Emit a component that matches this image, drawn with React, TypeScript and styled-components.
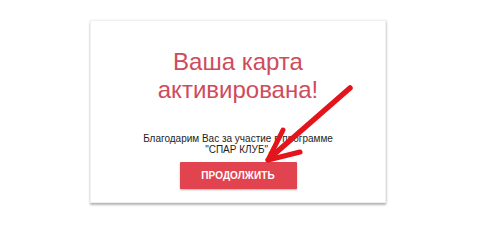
import React from 'react';
import styled, { createGlobalStyle } from 'styled-components';

const GlobalStyle = createGlobalStyle`
  html, body {
    margin: 0;
    padding: 0;
    background: #ffffff;
  }
  body {
    width: 480px;
    height: 240px;
    overflow: hidden;
  }
`;

const Page = styled.div`
  position: relative;
  width: 480px;
  height: 240px;
  padding: 20px 0 0 90px;
  box-sizing: border-box;
`;

const Card = styled.div`
  width: 296px;
  height: 183px;
  box-sizing: border-box;
  background: #ffffff;
  border: 1px solid #f0f0f0;
  box-shadow: 0 2px 2px rgba(0, 0, 0, 0.28), 1px 0 2px rgba(0, 0, 0, 0.08);
  display: flex;
  flex-direction: column;
  align-items: center;
  padding-top: 27px;
`;

const Title = styled.h1`
  margin: 0;
  font-family: 'Liberation Sans', Arial, sans-serif;
  font-weight: normal;
  font-size: 24px;
  line-height: 28px;
  color: #cf4b5c;
  text-align: center;
`;

const Message = styled.p`
  margin: 29px 0 0;
  font-family: 'Liberation Sans', Arial, sans-serif;
  font-size: 10px;
  line-height: 11px;
  color: #1e1e1e;
  text-align: center;
`;

const ContinueButton = styled.button`
  margin-top: 7px;
  width: 117px;
  height: 27px;
  border: none;
  border-radius: 1px;
  background: #e1434f;
  box-shadow: 0 1px 2px rgba(0, 0, 0, 0.3);
  color: #ffffff;
  font-family: 'Liberation Sans', Arial, sans-serif;
  font-weight: bold;
  font-size: 10px;
  letter-spacing: 0.1px;
  cursor: pointer;
`;

const Arrow = styled.svg`
  position: absolute;
  left: 0;
  top: 0;
  pointer-events: none;
`;

export default function App() {
  return (
    <>
      <GlobalStyle />
      <Page>
        <Card>
          <Title>
            Ваша карта
            <br />
            активирована!
          </Title>
          <Message>
            Благодарим Вас за участие в программе
            <br />
            "СПАР КЛУБ".
          </Message>
          <ContinueButton>ПРОДОЛЖИТЬ</ContinueButton>
        </Card>
        <Arrow width="480" height="240" viewBox="0 0 480 240">
          <g stroke="#e4141c" strokeLinecap="round" strokeLinejoin="round" fill="none">
            <path d="M350 88 L271 157" strokeWidth="5.5" />
            <path d="M268 160 L283 130" strokeWidth="5" />
            <path d="M268 160 L300 152" strokeWidth="5" />
          </g>
        </Arrow>
      </Page>
    </>
  );
}
